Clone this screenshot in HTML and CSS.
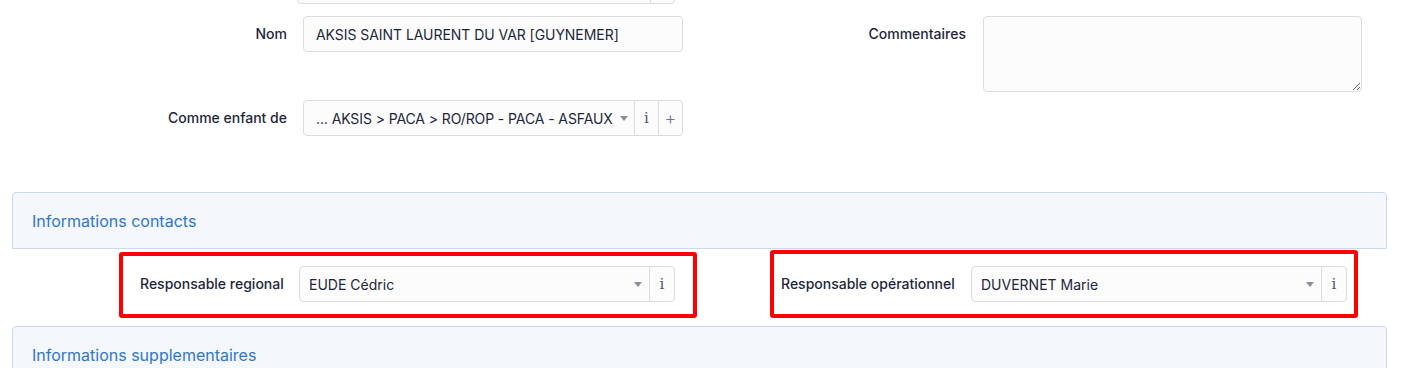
FILE: index.html
```html
<!DOCTYPE html>
<html lang="fr">
<head>
    <meta charset="UTF-8">
    <meta name="viewport" content="width=device-width, initial-scale=1.0">
    <title>Entité - AKSIS SAINT LAURENT DU VAR</title>
    <link rel="stylesheet" href="styles.css">
</head>
<body>
    <div class="page">
        <div class="top-stub"><span class="stub-main"></span><span class="stub-btn"></span></div>

        <div class="form-grid">
            <label class="form-label" for="name">Nom</label>
            <input class="form-control" id="name" type="text" value="AKSIS SAINT LAURENT DU VAR [GUYNEMER]">

            <label class="form-label" for="comment">Commentaires</label>
            <textarea class="form-control comment-box" id="comment"></textarea>

            <label class="form-label">Comme enfant de</label>
            <div class="input-group">
                <div class="select parent-select">
                    <span class="select-text">... AKSIS &gt; PACA &gt; RO/ROP - PACA - ASFAUX</span>
                    <span class="caret"></span>
                </div>
                <span class="addon addon-info">i</span>
                <span class="addon addon-plus">+</span>
            </div>
        </div>

        <section class="card">
            <div class="card-header">Informations contacts</div>
            <div class="contacts">
                <div class="highlight highlight-left">
                    <label class="form-label">Responsable regional</label>
                    <div class="input-group contact-group">
                        <div class="select">
                            <span class="select-text">EUDE Cédric</span>
                            <span class="caret"></span>
                        </div>
                        <span class="addon addon-info">i</span>
                    </div>
                </div>
                <div class="highlight highlight-right">
                    <label class="form-label">Responsable opérationnel</label>
                    <div class="input-group contact-group">
                        <div class="select">
                            <span class="select-text">DUVERNET Marie</span>
                            <span class="caret"></span>
                        </div>
                        <span class="addon addon-info">i</span>
                    </div>
                </div>
            </div>
        </section>

        <section class="card">
            <div class="card-header">Informations supplementaires</div>
        </section>
    </div>
</body>
</html>
```

FILE: styles.css
```css
* {
    box-sizing: border-box;
}
body {
    margin: 0;
    background-color: #ffffff;
    font-family: Inter, "Liberation Sans", sans-serif;
    font-size: 14px;
    color: #1d273b;
    overflow: hidden;
}
.page {
    padding: 0 27px 0 12px;
}
.top-stub {
    display: flex;
    width: 378px;
    height: 36px;
    margin: -32px 0 0 285px;
    border: 1px solid #dadcde;
    border-radius: 4px;
    background-color: #fcfcfc;
}
.stub-main {
    flex: 1;
}
.stub-btn {
    width: 24px;
    border-left: 1px solid #dadcde;
}
.form-grid {
    display: grid;
    grid-template-columns: 275px 380px 267px 380px;
    grid-template-rows: 76px 36px;
    column-gap: 16px;
    row-gap: 8px;
    margin: 12px 0 56px 0;
}
.form-label {
    font-weight: 500;
    line-height: 20px;
    padding-top: 8px;
    text-align: right;
}
.form-control {
    height: 36px;
    padding: 0 12px;
    border: 1px solid #dadcde;
    border-radius: 4px;
    background-color: #fcfcfc;
    font-family: inherit;
    font-size: 14px;
    letter-spacing: -0.05px;
    color: #1d273b;
    outline: none;
}
.comment-box {
    grid-row: 1;
    grid-column: 4;
    height: 76px;
    margin-left: 1px;
    resize: vertical;
}
.form-grid .form-label:nth-of-type(2) {
    grid-column: 3;
}
.input-group {
    display: flex;
    height: 36px;
    border: 1px solid #dadcde;
    border-radius: 4px;
    background-color: #fcfcfc;
}
.select {
    flex: 1;
    display: flex;
    align-items: center;
    padding: 0 7px 0 9px;
    min-width: 0;
}
.parent-select {
    padding: 0 6px 0 12px;
}
.parent-select .select-text {
    letter-spacing: -0.1px;
    overflow: visible;
}
.select-text {
    flex: 1;
    white-space: nowrap;
    overflow: hidden;
}
.caret {
    width: 0;
    height: 0;
    border-left: 4px solid transparent;
    border-right: 4px solid transparent;
    border-top: 5px solid #8a8f98;
    margin-left: 3px;
}
.addon {
    display: flex;
    align-items: center;
    justify-content: center;
    width: 24px;
    border-left: 1px solid #dadcde;
    color: #4b5670;
}
.addon-info {
    font-family: "DejaVu Serif", "Liberation Serif", serif;
    font-size: 15px;
}
.addon-plus {
    font-size: 18px;
    font-weight: 300;
    color: #6c7689;
}
.card-header {
    height: 57px;
    padding: 0 19px;
    display: flex;
    align-items: center;
    border: 1px solid #cad9ed;
    border-radius: 4px 4px 0 0;
    background-color: #f4f7fb;
    color: #2f76cc;
    font-size: 16px;
}
.contacts {
    display: flex;
    align-items: flex-start;
    height: 77px;
    padding: 1px 0 0 107px;
    gap: 73px;
}
.highlight {
    display: flex;
    align-items: center;
    gap: 15px;
    border: 4px solid #ff0000;
    border-radius: 3px;
}
.highlight .form-label {
    flex: 1;
    padding-top: 0;
    text-align: left;
    white-space: nowrap;
}
.highlight-left {
    width: 578px;
    margin-top: 2px;
    padding: 10px 18px 12px 17px;
}
.highlight-right {
    width: 588px;
    padding: 12px 7px 12px 7px;
}
.contact-group {
    width: 376px;
}
.contact-group .addon {
    width: 25px;
}
```
